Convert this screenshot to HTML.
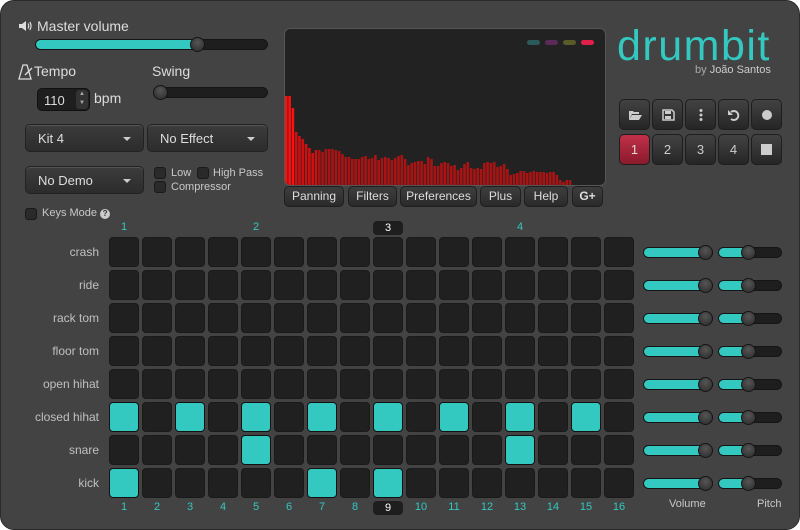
<!DOCTYPE html>
<html><head><meta charset="utf-8">
<style>
*{box-sizing:border-box;margin:0;padding:0}
body{width:800px;height:530px;background:#fff;font-family:"Liberation Sans",sans-serif;overflow:hidden;position:relative}
#p{position:absolute;left:0;top:0;width:800px;height:530px;background:#434343;border-radius:14px;border:1px solid #2a2a2a}
.a{position:absolute}
.t{color:#ddd;font-size:14px}
.track{position:absolute;height:11px;border-radius:6px;background:#1e1e1e;border:1px solid #151515;overflow:hidden}
.fill{position:absolute;left:0;top:0;bottom:0;background:#33c8c0}
.thumb{position:absolute;width:15px;height:15px;border-radius:50%;background:radial-gradient(circle at 50% 35%,#555,#2a2a2a);border:1px solid #151515}
.dd{position:absolute;height:28px;border-radius:5px;background:linear-gradient(#3c3c3c,#2c2c2c);border:1px solid #222;box-shadow:0 1px 0 #555 inset;color:#ddd;font-size:13px;padding:6px 12px}
.dd:after{content:"";position:absolute;right:12px;top:12px;border-left:4px solid transparent;border-right:4px solid transparent;border-top:4px solid #ccc}
.cb{position:absolute;width:12px;height:12px;border-radius:3px;background:#2a2a2a;border:1px solid #1a1a1a}
.sm{position:absolute;color:#c8c8c8;font-size:11px}
.btn{position:absolute;height:21px;border-radius:5px;background:linear-gradient(#3e3e3e,#2a2a2a);border:1px solid #1e1e1e;color:#ddd;font-size:12px;text-align:center;line-height:19px}
.ib{position:absolute;width:31px;height:31px;border-radius:5px;background:linear-gradient(#424242,#262626);border:1px solid #1e1e1e;color:#ccc;font-size:13px;text-align:center;line-height:29px}
.ib svg{position:absolute;left:8px;top:8px}
.cell{position:absolute;width:30px;height:30px;border-radius:4px;background:#202020;border:1px solid #1a1a1a}
.on{background:#33c8c0;border-color:#111}
.lbl{position:absolute;width:90px;text-align:right;color:#c0c0c0;font-size:12px;left:8px}
.num{position:absolute;width:30px;text-align:center;color:#33c8c0;font-size:11px}
.hl{background:#1e1e1e;color:#fff;border-radius:4px;height:14px;line-height:14px}
</style></head><body><div id="p">
<svg class="a" style="left:17px;top:19px" width="14" height="12" viewBox="0 0 14 12"><path d="M1 4h3l4-3v10L4 8H1z" fill="#ddd"/><path d="M10 3.5q1.5 2.5 0 5M11.8 2q2.5 4 0 8" stroke="#ddd" stroke-width="1.2" fill="none"/></svg>
<div class="a t" style="left:36px;top:17px;font-size:14px">Master volume</div>
<div class="track" style="left:34px;top:38px;width:233px"><div class="fill" style="width:163px"></div></div>
<div class="thumb" style="left:189px;top:36px"></div>
<svg class="a" style="left:17px;top:63px" width="16" height="16" viewBox="0 0 16 16"><path d="M5 1h4l4 14H1z" fill="none" stroke="#ddd" stroke-width="1.3"/><path d="M7 11l7-7" stroke="#ddd" stroke-width="1.3"/></svg>
<div class="a t" style="left:33px;top:62px">Tempo</div>
<div class="a t" style="left:151px;top:62px">Swing</div>
<div class="a" style="left:36px;top:87px;width:53px;height:23px;background:#1e1e1e;border:1px solid #111;border-radius:5px;color:#ddd;font-size:13px;padding:4px 6px">110<div class="a" style="right:1px;top:1px;width:12px;height:19px;background:#333;border-radius:3px;color:#aaa;font-size:6px;line-height:9px;text-align:center">▲<br>▼</div></div>
<div class="a t" style="left:93px;top:89px">bpm</div>
<div class="track" style="left:152px;top:86px;width:115px"></div>
<div class="thumb" style="left:152px;top:84px"></div>
<div class="dd" style="left:24px;top:123px;width:119px">Kit 4</div>
<div class="dd" style="left:146px;top:123px;width:121px">No Effect</div>
<div class="dd" style="left:24px;top:165px;width:119px">No Demo</div>
<div class="cb" style="left:153px;top:166px"></div><div class="sm" style="left:170px;top:166px">Low</div>
<div class="cb" style="left:196px;top:166px"></div><div class="sm" style="left:212px;top:166px">High Pass</div>
<div class="cb" style="left:153px;top:180px"></div><div class="sm" style="left:170px;top:180px">Compressor</div>
<div class="cb" style="left:24px;top:207px"></div><div class="sm" style="left:41px;top:206px">Keys Mode <span style="display:inline-block;width:10px;height:10px;border-radius:50%;background:#ccc;color:#333;font-size:8px;text-align:center;line-height:10px;font-weight:bold">?</span></div>

<div class="a" style="left:283px;top:27px;width:322px;height:158px;background:#222;border:1px solid #555;border-radius:6px;overflow:hidden">
<div class="a" style="left:242px;top:11px;width:13px;height:5px;border-radius:3px;background:#2a5a5a"></div>
<div class="a" style="left:260px;top:11px;width:13px;height:5px;border-radius:3px;background:#5a2a5a"></div>
<div class="a" style="left:278px;top:11px;width:13px;height:5px;border-radius:3px;background:#5a5a2a"></div>
<div class="a" style="left:296px;top:11px;width:13px;height:5px;border-radius:3px;background:#e0204a"></div>
<svg class="a" style="left:0;top:0" width="322" height="158" id="sv"><g fill="#b81212">
</g></svg>
</div>
<div class="btn" style="left:283px;top:185px;width:60px">Panning</div>
<div class="btn" style="left:347px;top:185px;width:49px">Filters</div>
<div class="btn" style="left:399px;top:185px;width:77px">Preferences</div>
<div class="btn" style="left:479px;top:185px;width:41px">Plus</div>
<div class="btn" style="left:523px;top:185px;width:44px">Help</div>
<div class="btn" style="left:571px;top:185px;width:31px;font-weight:bold">G+</div>

<div class="a" style="left:616px;top:20px;color:#33c8c0;font-size:43px;letter-spacing:1.5px;line-height:50px">drumbit</div>
<div class="a" style="left:694px;top:63px;color:#aaa;font-size:11px">by <span style="color:#ccc">João Santos</span></div>
<div class="ib" style="left:618px;top:98px"><svg width="14" height="14" viewBox="0 0 14 14"><path d="M1 3h4l1 1h5v2H4L1 12z" fill="#ccc"/><path d="M4 7h10l-3 5H1z" fill="#ccc"/></svg></div>
<div class="ib" style="left:651px;top:98px"><svg width="14" height="14" viewBox="0 0 14 14"><path d="M2 2h9l2 2v8H2z" fill="none" stroke="#ccc" stroke-width="1.5"/><rect x="4" y="3" width="6" height="3" fill="#ccc"/><rect x="4" y="8" width="6" height="3" fill="#ccc"/></svg></div>
<div class="ib" style="left:684px;top:98px"><svg width="14" height="14" viewBox="0 0 14 14"><circle cx="7" cy="2.5" r="1.5" fill="#ccc"/><circle cx="7" cy="7" r="1.5" fill="#ccc"/><circle cx="7" cy="11.5" r="1.5" fill="#ccc"/></svg></div>
<div class="ib" style="left:717px;top:98px"><svg width="14" height="14" viewBox="0 0 14 14"><path d="M4 4A4.5 4.5 0 1 1 4 11" fill="none" stroke="#ccc" stroke-width="2"/><path d="M1 2v5h5z" fill="#ccc"/></svg></div>
<div class="ib" style="left:750px;top:98px"><svg width="14" height="14"><circle cx="7" cy="7" r="5" fill="#ccc"/></svg></div>
<div class="ib" style="left:618px;top:133px;background:linear-gradient(#c03048,#8a1a2c);color:#ddd">1</div>
<div class="ib" style="left:651px;top:133px">2</div>
<div class="ib" style="left:684px;top:133px">3</div>
<div class="ib" style="left:717px;top:133px">4</div>
<div class="ib" style="left:750px;top:133px"><span style="display:inline-block;width:11px;height:11px;background:#ccc;vertical-align:-1px"></span></div>

<div id="grid"></div>
<div class="sm" style="left:668px;top:497px;font-size:11px">Volume</div>
<div class="sm" style="left:756px;top:497px;font-size:11px">Pitch</div>
</div>
<script>
var h=[90,90,78,54,50,47,42,38,33,36,36,34,37,37,37,36,35,32,29,29,27,27,27,29,30,27,28,31,26,28,29,28,26,28,30,31,27,21,23,24,25,25,22,29,27,20,20,23,24,23,20,21,16,18,22,24,18,17,18,17,23,24,23,24,19,20,22,17,11,12,13,15,15,13,14,15,14,14,14,13,14,14,11,6,4,6,6];
var s='';for(var i=0;i<h.length;i++){var c=i<3?'#ff1010':(i<10?'#d01010':'#a81414');s+='<rect x="'+(i*3.3)+'" y="'+(157-h[i])+'" width="2.6" height="'+h[i]+'" fill="'+c+'"/>';}
document.querySelector('#sv g').innerHTML=s;
var names=['crash','ride','rack tom','floor tom','open hihat','closed hihat','snare','kick'];
var on={5:[0,2,4,6,8,10,12,14],6:[4,12],7:[0,6,8]};
var g='';
[['1',0],['2',4],['3',8],['4',12]].forEach(function(a){var hl=a[0]=='3';g+='<div class="num'+(hl?' hl':'')+'" style="left:'+(108+33*a[1])+'px;top:220px">'+a[0]+'</div>';});
for(var r=0;r<8;r++){var y=236+33*r;g+='<div class="lbl" style="top:'+(y+8)+'px">'+names[r]+'</div>';
for(var c=0;c<16;c++){var o=on[r]&&on[r].indexOf(c)>=0;g+='<div class="cell'+(o?' on':'')+'" style="left:'+(108+33*c)+'px;top:'+y+'px"></div>';}
var cy=y+10;
g+='<div class="track" style="left:642px;top:'+cy+'px;width:70px"><div class="fill" style="width:62px"></div></div><div class="thumb" style="left:697px;top:'+(cy-2)+'px"></div>';
g+='<div class="track" style="left:717px;top:'+cy+'px;width:64px"><div class="fill" style="width:28px"></div></div><div class="thumb" style="left:740px;top:'+(cy-2)+'px"></div>';}
for(var c=0;c<16;c++){var hl=c==8;g+='<div class="num'+(hl?' hl':'')+'" style="left:'+(108+33*c)+'px;top:500px">'+(c+1)+'</div>';}
document.getElementById('grid').innerHTML=g;
</script>
</body></html>
